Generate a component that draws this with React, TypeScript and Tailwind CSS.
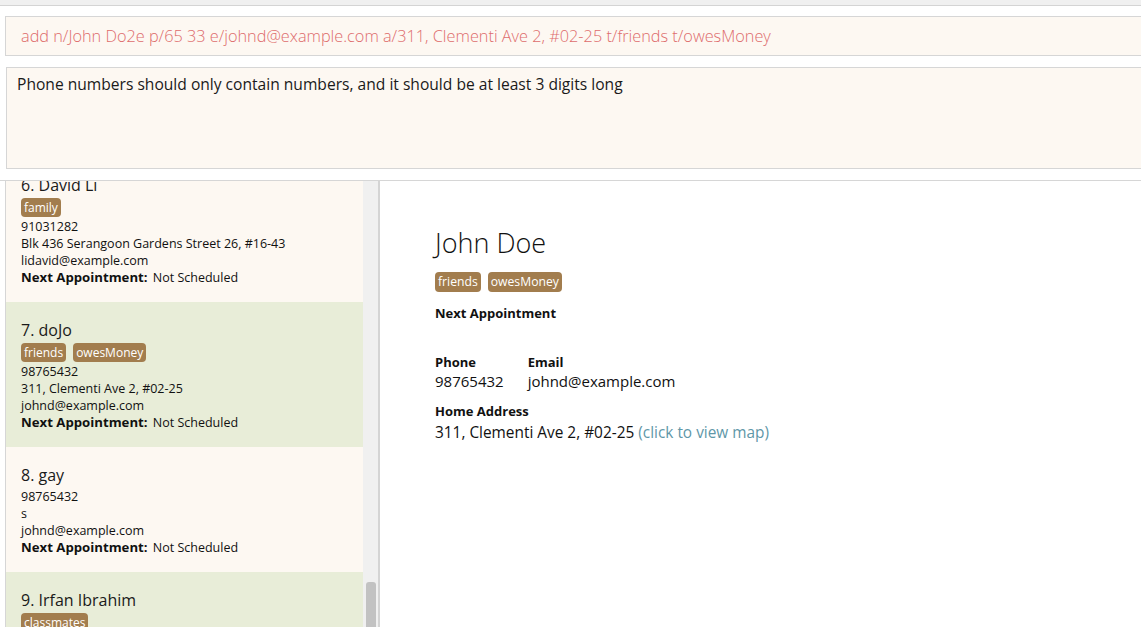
import React from 'react';

type Person = {
  idx: number;
  name: string;
  tags: string[];
  phone: string;
  address: string;
  email: string;
  bg: string;
};

const people: Person[] = [
  { idx: 6, name: 'David Li', tags: ['family'], phone: '91031282', address: 'Blk 436 Serangoon Gardens Street 26, #16-43', email: 'lidavid@example.com', bg: 'bg-[#fdf8f2]' },
  { idx: 7, name: 'doJo', tags: ['friends', 'owesMoney'], phone: '98765432', address: '311, Clementi Ave 2, #02-25', email: 'johnd@example.com', bg: 'bg-[#e8edd8]' },
  { idx: 8, name: 'gay', tags: [], phone: '98765432', address: 's', email: 'johnd@example.com', bg: 'bg-[#fdf8f2]' },
  { idx: 9, name: 'Irfan Ibrahim', tags: ['classmates'], phone: '92492021', address: 'Blk 47 Tampines Street 20, #17-35', email: 'irfan@example.com', bg: 'bg-[#e8edd8]' },
];

const Tag = ({ label, big }: { label: string; big?: boolean }) => (
  <span
    className={`inline-block rounded-[4px] bg-[#a27d4e] text-white px-[3px] ${big ? 'text-[12.2px] leading-[20px]' : 'text-[12px] leading-[19px]'}`}
  >
    {label}
  </span>
);

const PersonCard = ({ p }: { p: Person }) => (
  <div className={`${p.bg} pl-[15px] pt-[17px] pb-[16px]`}>
    <div className="text-[16px] leading-[22px] font-medium text-[#1a1a1a]">
      {p.idx}. {p.name}
    </div>
    {p.tags.length > 0 ? (
      <div className="flex gap-[7px] mt-[2px] mb-[1px]">
        {p.tags.map((t) => (
          <Tag key={t} label={t} />
        ))}
      </div>
    ) : (
      <div className="h-[2px]" />
    )}
    <div className="text-[12.5px] leading-[17px] text-[#111]">
      <div>{p.phone}</div>
      <div>{p.address}</div>
      <div>{p.email}</div>
      <div>
        <span className="font-bold text-[13.2px]">Next Appointment:</span>
        <span className="ml-[2px]"> Not Scheduled</span>
      </div>
    </div>
  </div>
);

export default function App() {
  return (
    <div className="w-[1141px] h-[627px] overflow-hidden bg-white flex flex-col font-['Open_Sans',sans-serif]">
      <div className="h-[6px] shrink-0 bg-[#f0f0f0] border-b border-[#d4d4d4]" />

      <div className="pl-[5px] pt-[10px]">
        <div className="h-[40px] border border-[#d6d6d6] border-r-0 bg-[#fdf8f2] pl-[15px] flex items-center text-[16.3px] font-light text-[#de6c6c]">
          add n/John Do2e p/65 33 e/johnd@example.com a/311, Clementi Ave 2, #02-25 t/friends t/owesMoney
        </div>
      </div>

      <div className="pl-[6px] pt-[11px] pb-[11px]">
        <div className="h-[102px] border border-[#d6d6d6] border-r-0 bg-[#fdf8f2] pl-[10px] pt-[5px] text-[15.6px] text-[#1a1a1a]">
          Phone numbers should only contain numbers, and it should be at least 3 digits long
        </div>
      </div>

      <div className="flex-1 min-h-0 flex border-t border-[#d6d6d6] pl-[5px]">
        <div className="flex min-h-0 border-l border-[#d6d6d6]">
          <div className="w-[357px] overflow-hidden">
            <div className="-mt-[24px]">
              {people.map((p) => (
                <PersonCard key={p.idx} p={p} />
              ))}
            </div>
          </div>
          <div className="w-[15px] bg-[#f0f0f0] flex flex-col justify-end pl-[3px] pr-[2px]">
            <div className="h-[45px] bg-[#c2c2c2] rounded-t-[3px]" />
          </div>
          <div className="w-[2px] bg-[#d4d4d4]" />
        </div>

        <div className="flex-1 pl-[55px] pt-[44px] text-[#111]">
          <div className="text-[27px] font-light leading-[36px]">John Doe</div>
          <div className="flex gap-[7px] mt-[11px]">
            <Tag label="friends" big />
            <Tag label="owesMoney" big />
          </div>
          <div className="mt-[13px] text-[13px] font-bold leading-[17px]">Next Appointment</div>

          <div className="flex gap-[24px] mt-[32px]">
            <div>
              <div className="text-[13px] font-bold leading-[17px]">Phone</div>
              <div className="text-[15px] leading-[20px]">98765432</div>
            </div>
            <div>
              <div className="text-[13px] font-bold leading-[17px]">Email</div>
              <div className="text-[15px] leading-[20px]">johnd@example.com</div>
            </div>
          </div>

          <div className="mt-[12px] text-[13px] font-bold leading-[17px]">Home Address</div>
          <div className="mt-[2px] text-[15.4px] leading-[21px]">
            311, Clementi Ave 2, #02-25 <span className="text-[#5f97a8]">(click to view map)</span>
          </div>
        </div>
      </div>
    </div>
  );
}
